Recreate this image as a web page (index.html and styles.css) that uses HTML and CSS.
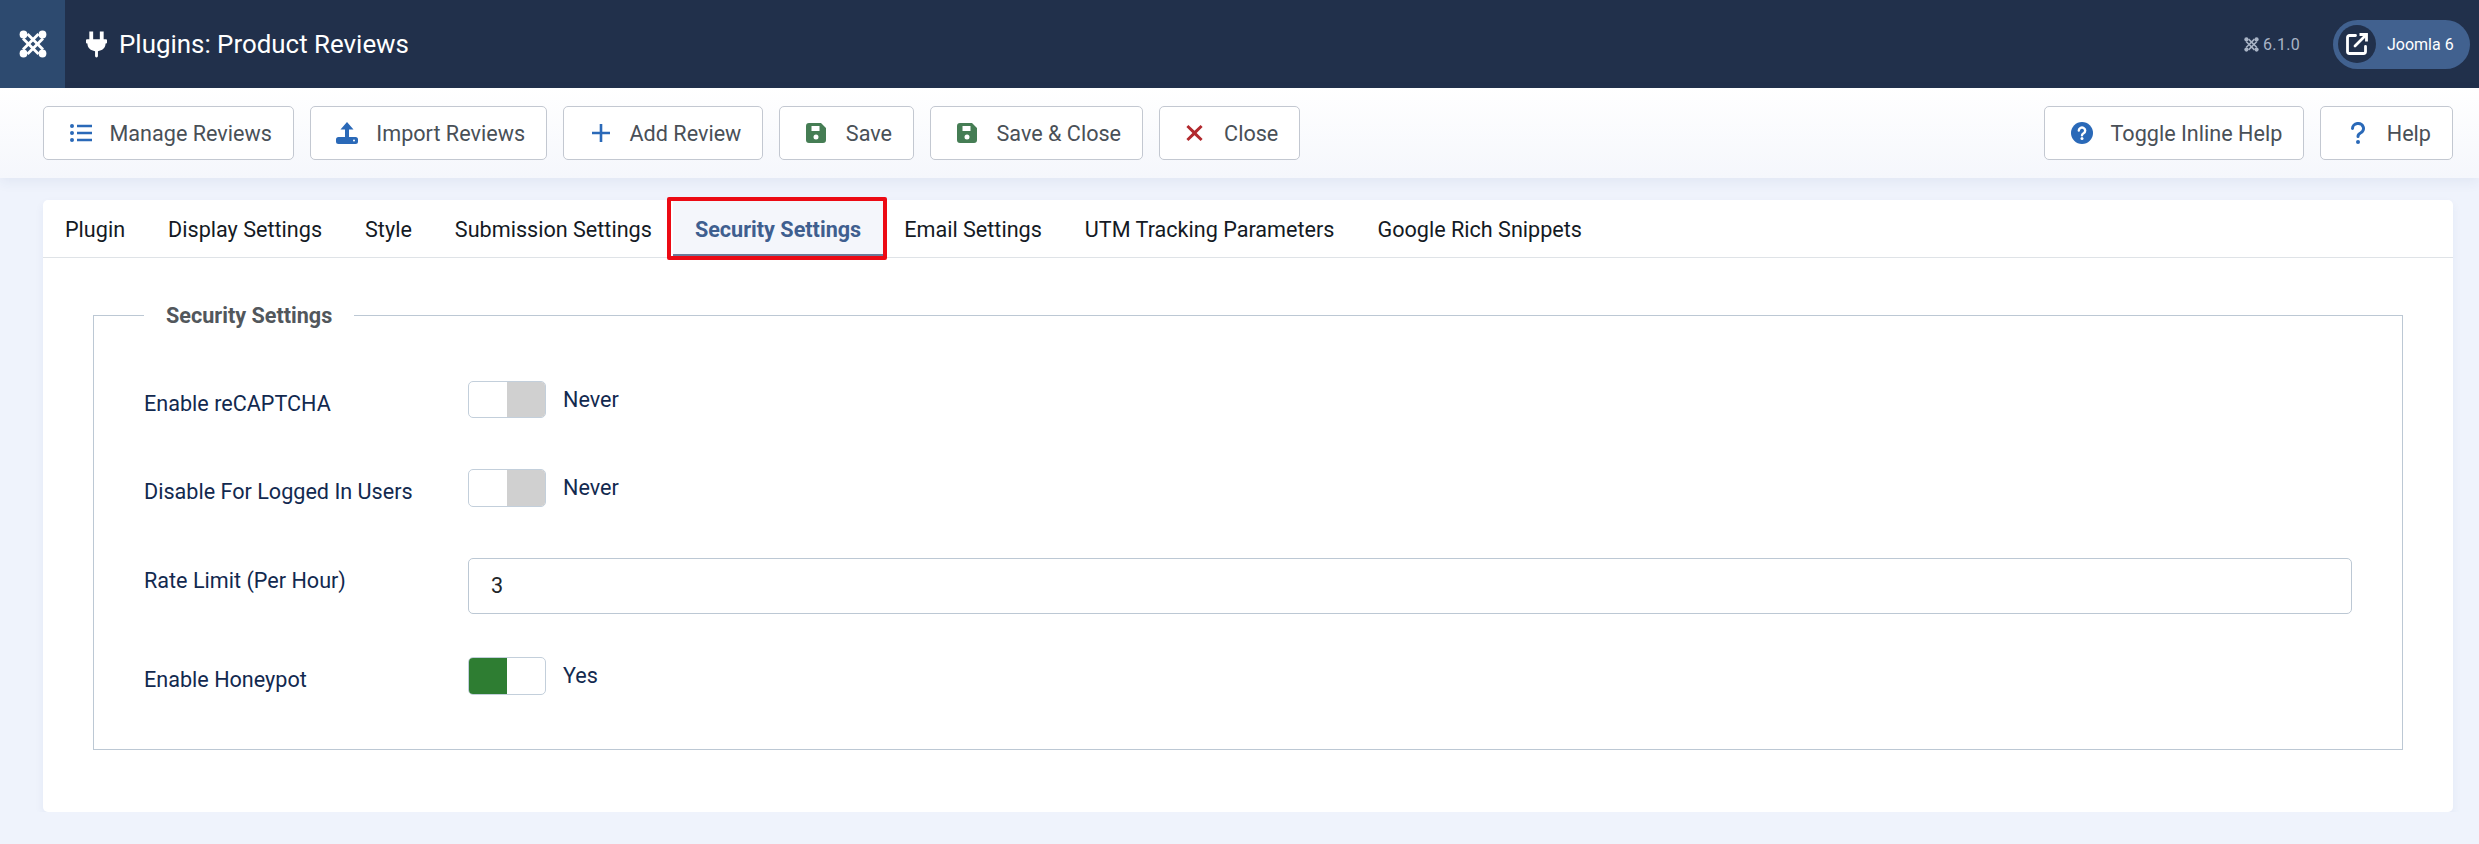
FILE: index.html
```html
<!DOCTYPE html>
<html lang="en">
<head>
    <meta charset="UTF-8">
    <meta name="viewport" content="width=device-width, initial-scale=1.0">
    <title>Plugins: Product Reviews</title>
    <link rel="stylesheet" href="styles.css">
</head>
<body>
    <svg class="defs" width="0" height="0">
        <symbol id="joomla" viewBox="0 0 28 28">
            <g fill="none" stroke="currentColor" stroke-width="2.900">
                <path d="M4 8.500L19.500 24"/>
                <path d="M8.500 4L24 19.500"/>
                <path d="M8.500 24L24 8.500"/>
                <path d="M4 19.500L19.500 4"/>
            </g>
            <g fill="currentColor">
                <circle cx="4.500" cy="4.500" r="3.900"/><circle cx="23.500" cy="4.500" r="3.900"/>
                <circle cx="4.500" cy="23.500" r="3.900"/><circle cx="23.500" cy="23.500" r="3.900"/>
            </g>
        </symbol>
        <symbol id="floppy" viewBox="0 0 20 20">
            <path fill="currentColor" fill-rule="evenodd" d="M3 0H15L20 5V17A3 3 0 0 1 17 20H3A3 3 0 0 1 0 17V3A3 3 0 0 1 3 0zM5.500 3v5h8V3zM10 11.500a2.500 2.500 0 1 0 0 5 2.500 2.500 0 0 0 0-5z"/>
        </symbol>
    </svg>

    <header class="topbar">
        <a class="brand"><svg class="brand-logo"><use href="#joomla"/></svg></a>
        <div class="page-title">
            <svg class="plug" viewBox="0 0 22 27"><path fill="currentColor" d="M3.500 0H7.500V8H14.500V0H18.500V8H21a1 1 0 0 1 1 1v2.500a1 1 0 0 1-1 1h-.5C20.500 17 17 20 12.500 20.500V25.500A1.500 1.500 0 0 1 11 27a1.500 1.500 0 0 1-1.500-1.500V20.500C5 20 1.500 17 1.500 12.500H1a1 1 0 0 1-1-1V9a1 1 0 0 1 1-1h2.500z"/></svg>
            <h1>Plugins: Product Reviews</h1>
        </div>
        <div class="top-right">
            <span class="version"><svg class="version-logo"><use href="#joomla"/></svg>6.1.0</span>
            <a class="site-pill">
                <span class="site-icon">
                    <svg viewBox="0 0 24 24" fill="none" stroke="#fff" stroke-width="2.800" stroke-linecap="round" stroke-linejoin="round"><path d="M10.500 3.500H4.500a2 2 0 0 0-2 2v14a2 2 0 0 0 2 2h14a2 2 0 0 0 2-2v-5"/><path d="M10 14L21 3"/><path d="M14.500 2.500h7v7" stroke-linecap="butt" stroke-linejoin="miter"/></svg>
                </span>
                <span>Joomla 6</span>
            </a>
        </div>
    </header>

    <div class="toolbar">
        <button class="btn">
            <svg class="icon blue" viewBox="0 0 22 18"><path fill="currentColor" d="M0 2a2 2 0 0 1 4 0 2 2 0 0 1-4 0zM0 9a2 2 0 0 1 4 0 2 2 0 0 1-4 0zM0 16a2 2 0 0 1 4 0 2 2 0 0 1-4 0zM7 .7h15v2.600H7zM7 7.700h15v2.600H7zM7 14.700h15v2.600H7z"/></svg>
            Manage Reviews
        </button>
        <button class="btn">
            <svg class="icon blue" viewBox="0 0 22 22"><path fill="currentColor" d="M11 0l6.500 7.500H13V15h-4V7.500H4.500z"/><path fill="currentColor" fill-rule="evenodd" d="M2.500 15h17a2.500 2.500 0 0 1 2.500 2.500v2a2.500 2.500 0 0 1-2.500 2.500h-17A2.500 2.500 0 0 1 0 19.500v-2A2.500 2.500 0 0 1 2.500 15zM18 17.500a1 1 0 1 0 0 2 1 1 0 0 0 0-2z"/></svg>
            Import Reviews
        </button>
        <button class="btn">
            <svg class="icon blue" viewBox="0 0 22 22"><path fill="currentColor" d="M9.700 2h2.600v7.700H20v2.600h-7.700V20H9.700v-7.700H2V9.700h7.700z"/></svg>
            Add Review
        </button>
        <button class="btn">
            <svg class="icon floppy green"><use href="#floppy"/></svg>
            Save
        </button>
        <button class="btn">
            <svg class="icon floppy green"><use href="#floppy"/></svg>
            Save &amp; Close
        </button>
        <button class="btn">
            <svg class="icon cross red" viewBox="0 0 17 16"><path fill="currentColor" d="M2.400 0L8.500 5.800 14.600 0l2 2-6 6 6 6-2 2-6.100-5.800L2.400 16l-2-2 6-6-6-6z"/></svg>
            Close
        </button>
        <div class="toolbar-right">
            <button class="btn">
                <svg class="icon blue" viewBox="0 0 22 22"><circle cx="11" cy="11" r="11" fill="currentColor"/><path fill="none" stroke="#fff" stroke-width="2.400" stroke-linecap="round" d="M7.800 8.600a3.200 3 0 1 1 4.800 2.600c-1 .6-1.600 1-1.600 2"/><circle cx="11" cy="16.500" r="1.500" fill="#fff"/></svg>
                Toggle Inline Help
            </button>
            <button class="btn">
                <svg class="icon blue" viewBox="0 0 22 22"><path fill="none" stroke="currentColor" stroke-width="3" stroke-linecap="round" d="M5.500 6.500a5.500 5 0 1 1 8 4.500c-1.700.9-2.500 1.600-2.500 3.500"/><circle cx="11" cy="20" r="2" fill="currentColor"/></svg>
                Help
            </button>
        </div>
    </div>

    <main class="card">
        <nav class="tabs">
            <a class="tab">Plugin</a>
            <a class="tab">Display Settings</a>
            <a class="tab">Style</a>
            <a class="tab">Submission Settings</a>
            <a class="tab active">Security Settings</a>
            <a class="tab">Email Settings</a>
            <a class="tab">UTM Tracking Parameters</a>
            <a class="tab">Google Rich Snippets</a>
        </nav>
        <div class="panel">
            <fieldset class="options">
                <legend>Security Settings</legend>
                <div class="row">
                    <label>Enable reCAPTCHA</label>
                    <div class="control">
                        <span class="switch"><span class="off"></span></span>
                        <span class="state">Never</span>
                    </div>
                </div>
                <div class="row">
                    <label>Disable For Logged In Users</label>
                    <div class="control">
                        <span class="switch"><span class="off"></span></span>
                        <span class="state">Never</span>
                    </div>
                </div>
                <div class="row">
                    <label>Rate Limit (Per Hour)</label>
                    <div class="control wide">
                        <input type="text" value="3">
                    </div>
                </div>
                <div class="row">
                    <label>Enable Honeypot</label>
                    <div class="control">
                        <span class="switch on"><span class="off"></span></span>
                        <span class="state">Yes</span>
                    </div>
                </div>
            </fieldset>
        </div>
    </main>
</body>
</html>
```

FILE: styles.css
```css
* {
    box-sizing: border-box;
}
body {
    margin: 0;
    font-family: Roboto, Arial, sans-serif;
    font-size: 21.6px;
    background-color: #eff3fc;
    overflow: hidden;
}
.defs {
    position: absolute;
}
.topbar {
    display: flex;
    align-items: center;
    height: 88px;
    background-color: #21304b;
    color: #fff;
}
.brand {
    display: flex;
    align-items: center;
    justify-content: center;
    width: 65px;
    height: 100%;
    background-color: #2d4a6f;
}
.brand-logo {
    width: 28px;
    height: 28px;
}
.page-title {
    display: flex;
    align-items: center;
    margin-left: 21px;
}
.plug {
    width: 21px;
    height: 27px;
    margin-right: 12px;
}
h1 {
    margin: 0;
    font-size: 25.9px;
    font-weight: 400;
}
.top-right {
    display: flex;
    align-items: center;
    margin-left: auto;
    margin-right: 9px;
}
.version {
    display: flex;
    align-items: center;
    color: #a9b4c6;
    font-size: 16px;
    letter-spacing: 0.3px;
    margin-right: 33px;
}
.version-logo {
    width: 15px;
    height: 15px;
    margin-right: 4px;
}
.site-pill {
    display: flex;
    align-items: center;
    width: 137px;
    height: 49px;
    padding-left: 5px;
    border-radius: 25px;
    background-color: #41618f;
    font-size: 16px;
    gap: 11px;
}
.site-icon {
    display: flex;
    align-items: center;
    justify-content: center;
    width: 38px;
    height: 38px;
    border-radius: 50%;
    background-color: #21304b;
}
.site-icon svg {
    width: 24px;
    height: 24px;
}
.toolbar {
    display: flex;
    align-items: center;
    gap: 16px;
    height: 90px;
    padding: 0 26px 0 43px;
    background: linear-gradient(#fff, #f5f7fc);
    box-shadow: 0 4px 12px rgba(40, 70, 130, 0.07);
}
.toolbar-right {
    display: flex;
    gap: 16px;
    margin-left: auto;
}
.btn {
    display: flex;
    align-items: center;
    height: 54px;
    padding: 0 21px 0 25.5px;
    border: 1px solid #c3c8d1;
    border-radius: 5px;
    background: #fff;
    color: #495057;
    font-family: inherit;
    font-size: 21.6px;
    white-space: nowrap;
}
.icon {
    width: 22px;
    height: 22px;
    margin-right: 18px;
}
.icon.floppy {
    width: 20px;
    height: 20px;
    margin-right: 20px;
}
.icon.cross {
    width: 17px;
    height: 16px;
    margin-right: 21.5px;
}
.blue {
    color: #2a69b8;
}
.green {
    color: #457d54;
}
.red {
    color: #b2292e;
}
.card {
    height: 612px;
    margin: 22px 26px 0 43px;
    background: #fff;
    border-radius: 5px;
    box-shadow: 0 4px 10px rgba(40, 70, 130, 0.06);
}
.tabs {
    display: flex;
    height: 58px;
    padding-left: 0.5px;
    border-bottom: 1px solid #dfe3e7;
}
.tab {
    position: relative;
    display: flex;
    align-items: center;
    padding: 1px 21.5px 0;
    color: #141a24;
}
.tab.active {
    background-color: #f4f6fb;
    color: #3f5f8f;
    font-weight: 700;
    box-shadow: inset 0 -3px 0 #6c7a99;
}
.tab.active::after {
    content: "";
    position: absolute;
    top: -3px;
    right: -4px;
    bottom: -3px;
    left: -6px;
    border: 4px solid #ec0a14;
    border-radius: 2px;
}
.panel {
    padding: 42px 50px 0;
}
.options {
    margin: 0;
    padding: 49.5px 50px 4px;
    border: 1px solid #bcc8d4;
    height: 450px;
}
legend {
    padding: 0 22px;
    color: #52575c;
    font-size: 21.6px;
    font-weight: 700;
    line-height: 31px;
}
.row {
    display: flex;
    margin-bottom: 43.5px;
}
label {
    flex: 0 0 324px;
    height: 45px;
    line-height: 45px;
    color: #12294f;
}
.control {
    display: flex;
    align-items: center;
    height: 37.5px;
}
.control.wide {
    flex: 1;
    height: 56px;
}
.switch {
    display: flex;
    justify-content: flex-end;
    width: 78px;
    height: 100%;
    border: 1px solid #c3cfdb;
    border-radius: 5px;
    overflow: hidden;
    background: #fff;
}
.switch .off {
    width: 50%;
    background-color: #d0d0d0;
}
.switch.on {
    justify-content: flex-start;
}
.switch.on .off {
    background-color: #2e7d32;
}
.state {
    margin-left: 17px;
    color: #12294f;
}
input {
    width: 100%;
    height: 56px;
    padding: 0 22px;
    border: 1px solid #bcc8d4;
    border-radius: 5px;
    color: #212529;
    font-family: inherit;
    font-size: 21.6px;
}
```
